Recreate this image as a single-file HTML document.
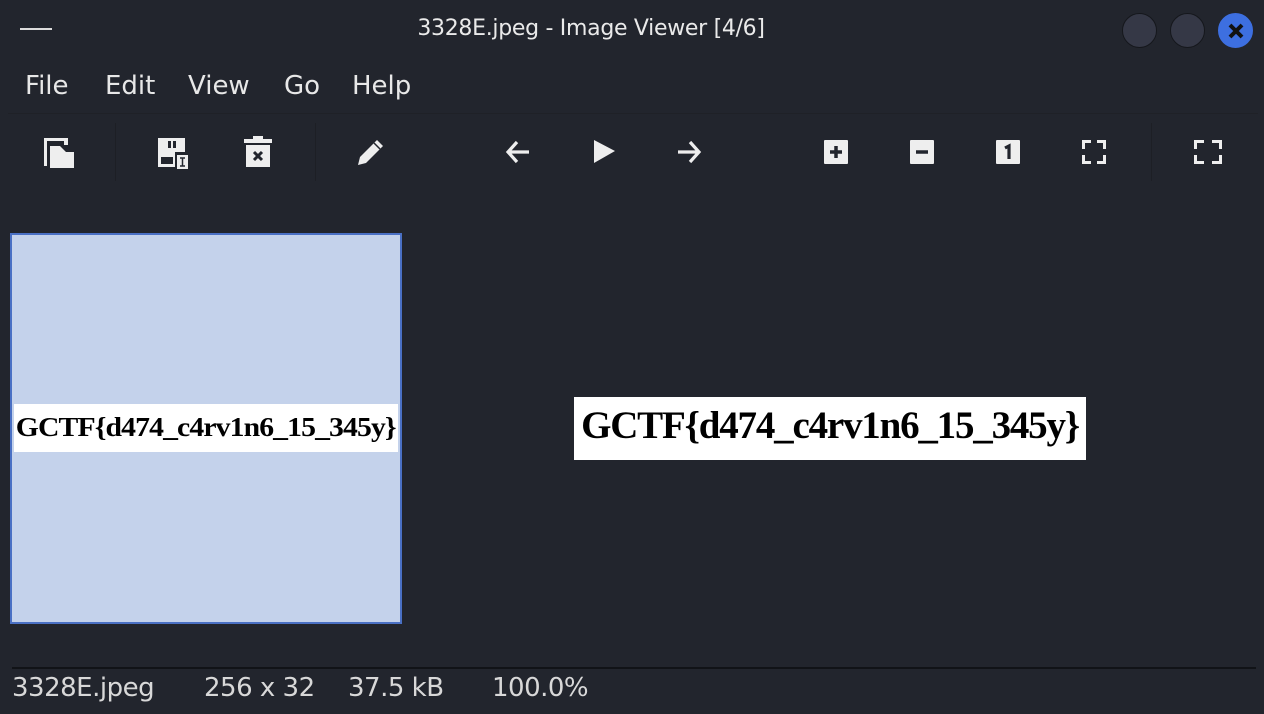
<!DOCTYPE html>
<html><head><meta charset="utf-8"><style>
*{margin:0;padding:0;box-sizing:border-box}
body{width:1264px;height:714px;background:#22252d;overflow:hidden;position:relative;font-family:"DejaVu Sans","Liberation Sans",sans-serif;color:#e6e6e6}
.a{position:absolute}
.menu span{position:absolute;top:71px;font-size:26px;color:#e8e8e8;letter-spacing:0}
.circ{position:absolute;top:13px;width:35px;height:35px;border-radius:50%;background:#353846;border:1.5px solid #15171c}
.ic{position:absolute}
.sep{position:absolute;top:123px;width:1px;height:58px;background:#1d1f25}
.st{position:absolute;top:673px;font-size:26px;color:#d8d8d8;letter-spacing:-0.5px}
.flag{font-family:"Liberation Serif",serif;font-weight:bold;color:#000;white-space:nowrap;text-align:center}
.flag span{display:inline-block}
</style></head><body>
<div class="a" style="left:20px;top:28px;width:32px;height:2px;background:#dcdcdc"></div>
<div class="a" style="left:415px;top:16px;width:352px;text-align:center;font-size:22px;color:#eaeaea;letter-spacing:-0.3px;white-space:nowrap">3328E.jpeg - Image Viewer [4/6]</div>
<div class="circ" style="left:1122px"></div>
<div class="circ" style="left:1170px"></div>
<div class="circ" style="left:1218px;background:#3d6fe0;border-color:#3d6fe0"></div>
<svg class="ic" style="left:1218px;top:13px" width="36" height="36"><path d="M12 12L24 24M24 12L12 24" stroke="#111" stroke-width="4"/></svg>
<div class="menu"><span style="left:25px">File</span><span style="left:105px">Edit</span><span style="left:188px">View</span><span style="left:284px">Go</span><span style="left:352px">Help</span></div>
<div class="a" style="left:8px;top:113px;width:1250px;height:1px;background:#1f2127"></div>
<div class="sep" style="left:115px"></div><div class="sep" style="left:315px"></div><div class="sep" style="left:1151px"></div>
<svg class="ic" style="left:44px;top:138px" width="30" height="30"><path d="M0 0h24v7h-4V3H3v25H0z" fill="#eee"/><path d="M6 8h10l6 6h8v16H6z" fill="#eee"/></svg>
<svg class="ic" style="left:158px;top:137px" width="30" height="32"><path d="M0 1h27v14h-10v15H0z" fill="#eee"/><rect x="10" y="4" width="3" height="7" fill="#22252d"/><rect x="15" y="4" width="3" height="7" fill="#22252d"/><rect x="3" y="20" width="12" height="7" fill="#22252d"/><rect x="19" y="18" width="11" height="14" fill="#eee"/><path d="M22 21h5M24.5 21v8M22 29h5" stroke="#22252d" stroke-width="1.5"/></svg>
<svg class="ic" style="left:244px;top:136px" width="30" height="32"><rect x="0" y="3" width="28" height="4" fill="#eee"/><rect x="9" y="0" width="10" height="4" fill="#eee"/><rect x="2" y="9" width="24" height="22" fill="#eee"/><path d="M10 16l8 8M18 16l-8 8" stroke="#22252d" stroke-width="3"/></svg>
<svg class="ic" style="left:357px;top:138px" width="30" height="30"><path d="M1 27l2-8L20 2l6 6L9 25z" fill="#eee"/><path d="M17 5l6 6" stroke="#22252d" stroke-width="1.5"/></svg>
<svg class="ic" style="left:505px;top:139px" width="26" height="26"><path d="M24 13H3M12 3L3 13l9 10" stroke="#eee" stroke-width="3.2" fill="none"/></svg>
<svg class="ic" style="left:594px;top:140px" width="24" height="24"><path d="M0 0L21 11 0 23z" fill="#eee"/></svg>
<svg class="ic" style="left:677px;top:139px" width="26" height="26"><path d="M1 13h21M13 3l9 10-9 10" stroke="#eee" stroke-width="3.2" fill="none"/></svg>
<svg class="ic" style="left:824px;top:140px" width="24" height="24"><rect width="24" height="24" rx="1" fill="#eee"/><path d="M6 12h12M12 6v12" stroke="#22252d" stroke-width="3.5"/></svg>
<svg class="ic" style="left:910px;top:140px" width="24" height="24"><rect width="24" height="24" rx="1" fill="#eee"/><path d="M6 12h12" stroke="#22252d" stroke-width="3.5"/></svg>
<svg class="ic" style="left:996px;top:140px" width="24" height="24"><rect width="24" height="24" rx="1" fill="#eee"/><path d="M9 8l4-2v13" stroke="#22252d" stroke-width="3.2" fill="none"/></svg>
<svg class="ic" style="left:1082px;top:140px" width="24" height="24"><path d="M1.5 9V1.5H9M15 1.5h7.5V9M22.5 15v7.5H15M9 22.5H1.5V15" stroke="#eee" stroke-width="3" fill="none"/></svg>
<svg class="ic" style="left:1194px;top:140px" width="28" height="24"><path d="M1.5 9V1.5H10M18 1.5h8.5V9M26.5 15v7.5H18M10 22.5H1.5V15" stroke="#eee" stroke-width="3" fill="none"/></svg>
<div class="a" style="left:10px;top:233px;width:392px;height:391px;background:#c4d2eb;border:2px solid #4a70c4"></div>
<div class="a flag" style="left:14px;top:404px;width:384px;height:48px;background:#fff;font-size:27px;line-height:46px;letter-spacing:-0.8px"><span style="transform:scaleX(1.1)">GCTF{d474_c4rv1n6_15_345y}</span></div>
<div class="a flag" style="left:574px;top:397px;width:512px;height:63px;background:#fff;font-size:39px;line-height:58px;letter-spacing:-1.2px"><span>GCTF{d474_c4rv1n6_15_345y}</span></div>
<div class="a" style="left:12px;top:667px;width:1244px;height:2px;background:#111317"></div>
<span class="st" style="left:12px">3328E.jpeg</span>
<span class="st" style="left:204px">256 x 32</span>
<span class="st" style="left:348px">37.5 kB</span>
<span class="st" style="left:492px">100.0%</span>
</body></html>
